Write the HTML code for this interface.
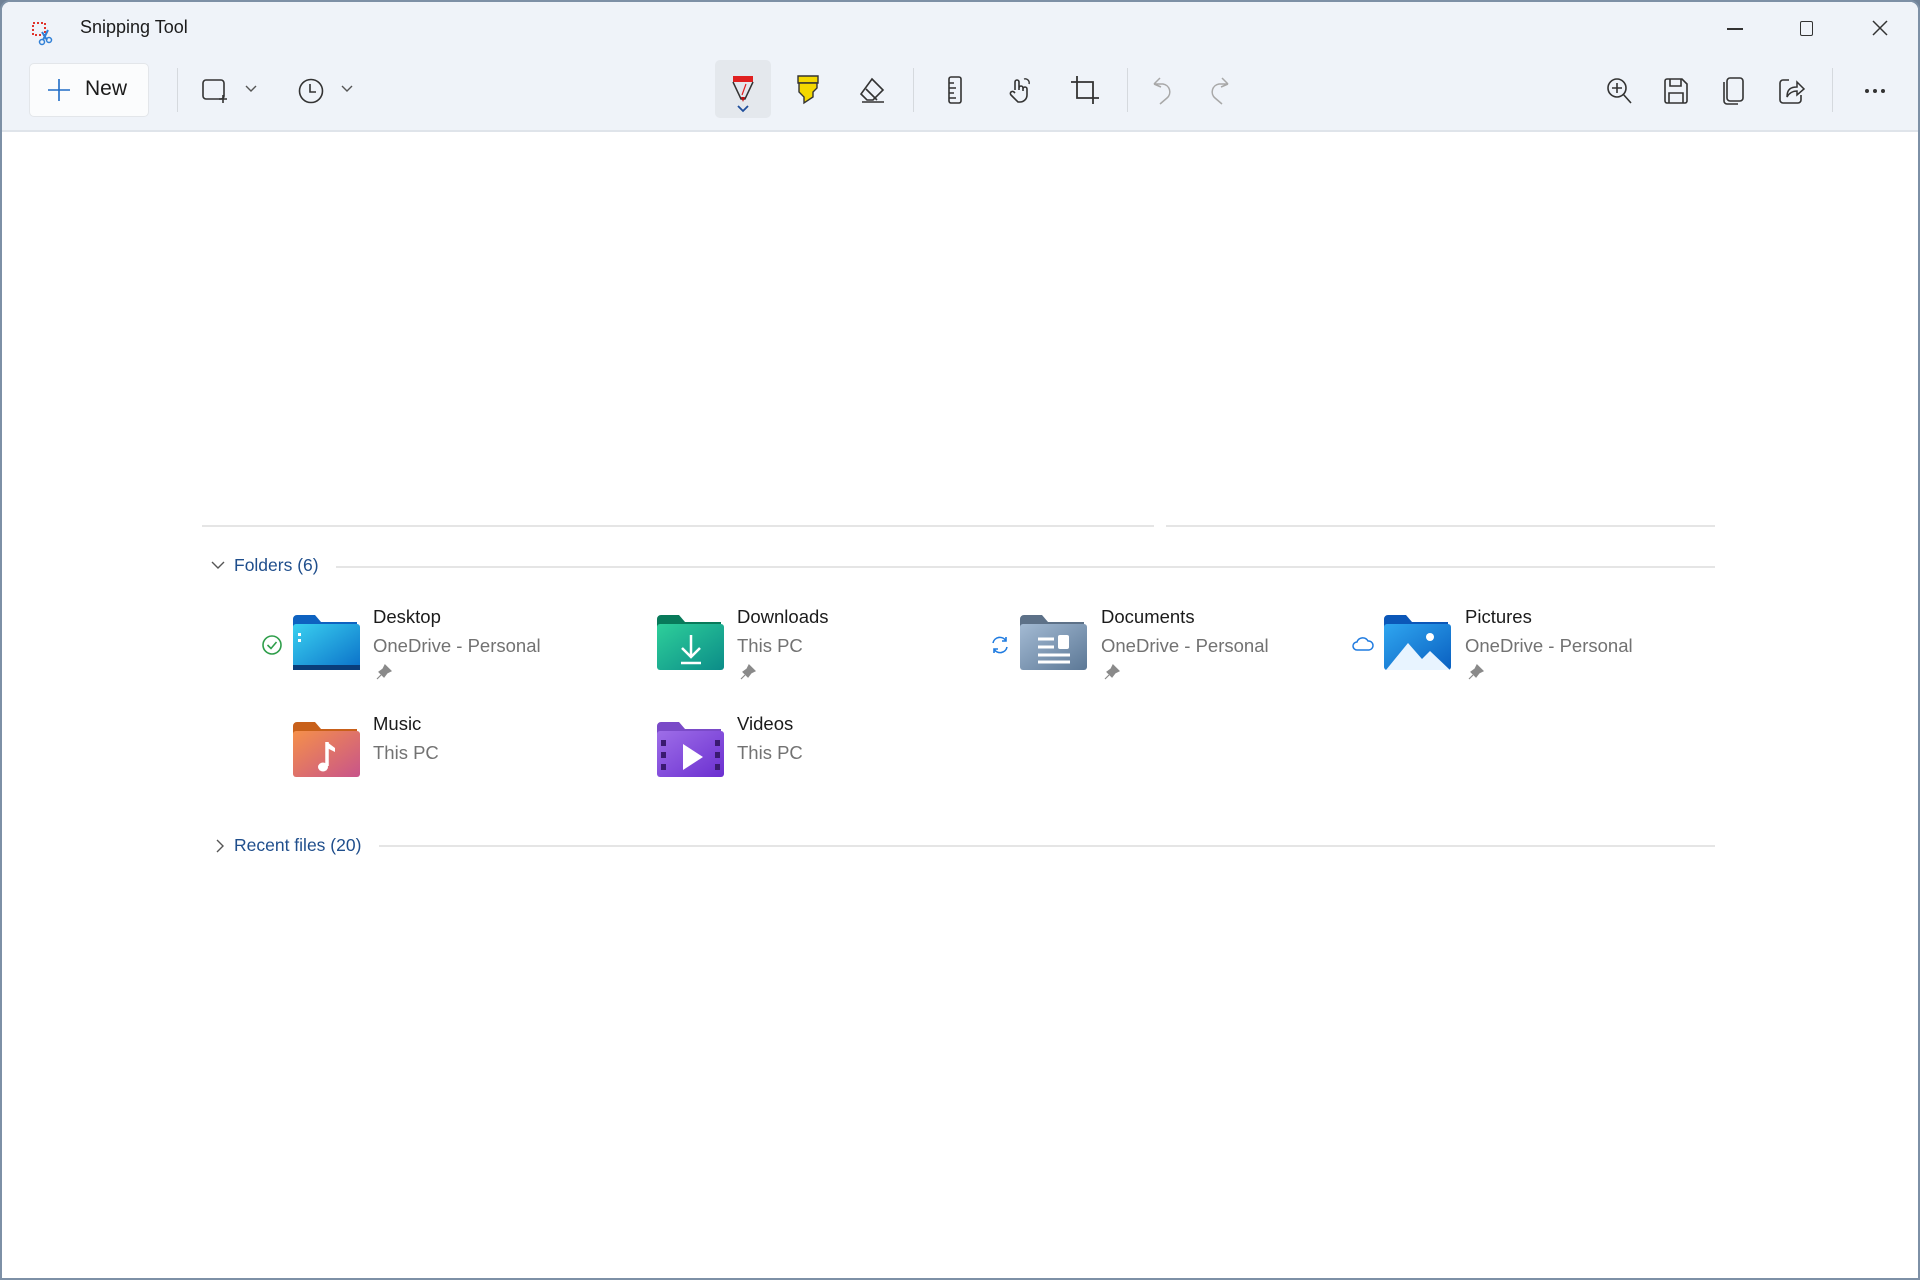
<!DOCTYPE html>
<html><head><meta charset="utf-8"><style>
*{margin:0;padding:0;box-sizing:border-box}
body{width:1920px;height:1280px;overflow:hidden;background:#6f8197;font-family:"Segoe UI","Liberation Sans",sans-serif;position:relative}
.win{position:absolute;left:0;top:0;width:1920px;height:1280px;background:#fff;border:2px solid #7d90a6;border-radius:10px 10px 0 0;overflow:hidden}
.top{position:absolute;left:0;top:0;width:100%;height:130px;background:#eff3f9;border-bottom:2px solid #dfe4ea}
.tb{position:absolute;left:-2px;top:-3px;width:100%;height:130px}
.ct{position:absolute;left:-3px;top:0;width:100%;height:100%}
.abs{position:absolute}
.t{position:absolute;white-space:nowrap}
.sep{position:absolute;width:1px;height:44px;top:69px;background:#d5d9de}
svg{position:absolute;overflow:visible}
.name{font-size:18.5px;color:#1b1b1b}
.sub{font-size:18.5px;color:#727272}
.hdr{font-size:17.5px;color:#1f4e8c}
.line{position:absolute;height:2px;background:#e5e5e5}
</style></head><body>
<div class="win">
<div class="top">
 <svg style="left:28px;top:18px" width="26" height="26" viewBox="0 0 26 26"><rect x="3" y="3" width="12" height="12" fill="none" stroke="#e0342c" stroke-width="2" stroke-dasharray="2 2"/><path d="M12 12 L17 20 M18 10 L13 20" stroke="#2f7fd6" stroke-width="2" fill="none"/><circle cx="12" cy="22" r="2.5" fill="none" stroke="#2f7fd6" stroke-width="1.5"/><circle cx="19" cy="20" r="2.5" fill="none" stroke="#2f7fd6" stroke-width="1.5"/></svg>
 <div class="t" style="left:78px;top:15px;font-size:18px;color:#1b1b1b">Snipping Tool</div>
 <div class="abs" style="left:1725px;top:26px;width:16px;height:1.5px;background:#333"></div>
 <div class="abs" style="left:1798px;top:19px;width:13px;height:15px;border:1.5px solid #333;border-radius:2px"></div>
 <svg style="left:1870px;top:18px" width="16" height="16"><path d="M1 1 L15 15 M15 1 L1 15" stroke="#333" stroke-width="1.5"/></svg>
 <div class="tb">
 <div class="abs" style="left:29px;top:64px;width:120px;height:54px;background:#fbfcfd;border:1px solid #e3e6ea;border-radius:5px"></div>
 <svg style="left:48px;top:80px" width="22" height="22"><path d="M11 0 V22 M0 11 H22" stroke="#1f6cc6" stroke-width="1.6"/></svg>
 <div class="t" style="left:85px;top:78px;font-size:21px;color:#1b1b1b">New</div>
 <div class="sep" style="left:177px"></div>
 <svg style="left:202px;top:80px" width="28" height="24"><rect x="1" y="1" width="21" height="19" rx="3" fill="none" stroke="#333" stroke-width="1.6"/><path d="M21 16 V24 M17 20 H25" stroke="#333" stroke-width="1.6"/></svg>
 <svg style="left:245px;top:86px" width="12" height="8"><path d="M1 1 L6 6 L11 1" stroke="#555" stroke-width="1.4" fill="none"/></svg>
 <svg style="left:298px;top:79px" width="26" height="26"><circle cx="13" cy="13" r="11.5" fill="none" stroke="#333" stroke-width="1.6"/><path d="M12 6 V14 H18" stroke="#333" stroke-width="1.6" fill="none"/></svg>
 <svg style="left:341px;top:86px" width="12" height="8"><path d="M1 1 L6 6 L11 1" stroke="#555" stroke-width="1.4" fill="none"/></svg>
 <div class="abs" style="left:715px;top:61px;width:56px;height:58px;background:#e4e8ed;border-radius:5px"></div>
 <svg style="left:731px;top:76px" width="24" height="30"><path d="M2 1 H22 V7 H2 Z" fill="#e02020"/><path d="M2 7 L10 24 H14 L22 7" fill="none" stroke="#333" stroke-width="1.5"/><path d="M10 22 L12 27 L14 22Z" fill="#c01010"/><path d="M15 9 L11 20" stroke="#e02020" stroke-width="1.2"/></svg>
 <svg style="left:737px;top:106px" width="12" height="8"><path d="M1 1 L6 6 L11 1" stroke="#1f4e9c" stroke-width="1.8" fill="none"/></svg>
 <svg style="left:796px;top:76px" width="24" height="30"><path d="M2 1 H22 V8 H2Z" fill="#f4d800" stroke="#333" stroke-width="1.4"/><path d="M3 8 V17 L8 22 V28 L17 22 V17 L21 13 V8Z" fill="#f4d800" stroke="#333" stroke-width="1.4"/></svg>
 <svg style="left:858px;top:78px" width="28" height="26"><path d="M14 2 L25 13 L15 23 H9 L3 17Z" fill="none" stroke="#333" stroke-width="1.6"/><path d="M8 12 L19 23 M4 25 H26" stroke="#333" stroke-width="1.6"/></svg>
 <div class="sep" style="left:913px"></div>
 <svg style="left:947px;top:77px" width="16" height="28"><rect x="2" y="1" width="12" height="26" rx="2" fill="none" stroke="#333" stroke-width="1.6"/><path d="M2 7 H7 M2 12 H9 M2 17 H7 M2 22 H9" stroke="#333" stroke-width="1.4"/></svg>
 <svg style="left:1006px;top:77px" width="28" height="28"><path d="M9 14 V6 a2 2 0 0 1 4 0 V14 M13 12 a2 2 0 0 1 4 0 V15 M17 13 a2 2 0 0 1 4 0 V19 a7 7 0 0 1 -7 7 H12 L5 19 a2 2 0 0 1 3 -3 L9 17" fill="none" stroke="#333" stroke-width="1.6"/><path d="M18 3 a4 4 0 0 1 5 5" fill="none" stroke="#333" stroke-width="1.4"/></svg>
 <svg style="left:1071px;top:77px" width="28" height="30"><path d="M6 0 V22 H28 M0 6 H22 V28" fill="none" stroke="#333" stroke-width="1.8"/></svg>
 <div class="sep" style="left:1127px"></div>
 <svg style="left:1151px;top:77px" width="24" height="30"><path d="M3 8 L9 2 M3 8 L10 11 M3 8 H12 a8 8 0 0 1 4 14 L9 28" fill="none" stroke="#a8a8a8" stroke-width="1.5"/></svg>
 <svg style="left:1207px;top:77px" width="24" height="30"><path d="M21 8 L15 2 M21 8 L14 11 M21 8 H12 a8 8 0 0 0 -4 14 L15 28" fill="none" stroke="#a8a8a8" stroke-width="1.5"/></svg>
 <svg style="left:1606px;top:78px" width="28" height="28"><circle cx="11" cy="11" r="9" fill="none" stroke="#333" stroke-width="1.6"/><path d="M11 6 V16 M6 11 H16 M17 17 L25 26" stroke="#333" stroke-width="1.6"/></svg>
 <svg style="left:1664px;top:79px" width="24" height="26"><path d="M1 3 a2 2 0 0 1 2 -2 H18 L23 6 V23 a2 2 0 0 1 -2 2 H3 a2 2 0 0 1 -2 -2Z" fill="none" stroke="#333" stroke-width="1.6"/><path d="M6 1 V8 H17 V1 M5 25 V15 H19 V25" fill="none" stroke="#333" stroke-width="1.6"/></svg>
 <svg style="left:1723px;top:78px" width="22" height="28"><rect x="4" y="1" width="16" height="23" rx="3" fill="none" stroke="#333" stroke-width="1.6"/><path d="M1 5 V24 a3 3 0 0 0 3 3 H15" fill="none" stroke="#333" stroke-width="1.6"/></svg>
 <svg style="left:1779px;top:78px" width="26" height="28"><path d="M10 3 H4 a3 3 0 0 0 -3 3 V23 a3 3 0 0 0 3 3 H19 a3 3 0 0 0 3 -3 V18" fill="none" stroke="#333" stroke-width="1.6"/><path d="M8 20 C8 12 12 10 18 10 V5 L25 12 L18 18 V14 C14 14 10 16 8 20Z" fill="none" stroke="#333" stroke-width="1.5"/></svg>
 <div class="sep" style="left:1832px"></div>
 <div class="abs" style="left:1865px;top:90px;width:4px;height:4px;border-radius:2px;background:#333;box-shadow:8px 0 #333,16px 0 #333"></div>
 </div>
</div>

<div class="ct">
<div class="line" style="left:203px;top:523px;width:952px"></div>
<div class="line" style="left:1167px;top:523px;width:549px"></div>

<svg style="left:212px;top:559px" width="14" height="9"><path d="M1 1 L7 7 L13 1" stroke="#555" stroke-width="1.4" fill="none"/></svg>
<div class="t hdr" style="left:235px;top:553px">Folders (6)</div>
<div class="line" style="left:337px;top:564px;width:1379px"></div>

<svg style="left:217px;top:837px" width="9" height="14"><path d="M1 1 L7 7 L1 13" stroke="#555" stroke-width="1.4" fill="none"/></svg>
<div class="t hdr" style="left:235px;top:833px">Recent files (20)</div>
<div class="line" style="left:380px;top:843px;width:1336px"></div>

<svg width="0" height="0"><defs>
<linearGradient id="gb" x1="0" y1="0" x2="1" y2="1"><stop offset="0" stop-color="#3ad0f0"/><stop offset="1" stop-color="#0a6fc8"/></linearGradient>
<linearGradient id="gg" x1="0" y1="0" x2="1" y2="1"><stop offset="0" stop-color="#2ecf9a"/><stop offset="1" stop-color="#0b8c88"/></linearGradient>
<linearGradient id="gs" x1="0" y1="0" x2="1" y2="1"><stop offset="0" stop-color="#a3bad3"/><stop offset="1" stop-color="#5c7896"/></linearGradient>
<linearGradient id="gp" x1="0" y1="0" x2="1" y2="1"><stop offset="0" stop-color="#2fa6f0"/><stop offset="1" stop-color="#0a5fc0"/></linearGradient>
<linearGradient id="go" x1="0" y1="0" x2="1" y2="1"><stop offset="0" stop-color="#f5904a"/><stop offset="1" stop-color="#c8548a"/></linearGradient>
<linearGradient id="gv" x1="0" y1="0" x2="1" y2="1"><stop offset="0" stop-color="#9e6ee8"/><stop offset="1" stop-color="#6b2fd0"/></linearGradient>
</defs></svg>

<svg style="left:294px;top:613px" width="67" height="56"><path d="M0 4 a4 4 0 0 1 4 -4 H22 L28 7 H64 V20 H0Z" fill="#0e62c0"/><rect x="0" y="9" width="67" height="46" rx="3" fill="url(#gb)"/><rect x="0" y="50" width="67" height="5" fill="#0a3d7a"/><rect x="5" y="18" width="3" height="3" fill="#fff"/><rect x="5" y="24" width="3" height="3" fill="#fff"/></svg>
<svg style="left:262px;top:632px" width="22" height="22"><circle cx="11" cy="11" r="9" fill="none" stroke="#2e9e4a" stroke-width="1.6"/><path d="M6.5 11 L10 14.5 L15.5 8" fill="none" stroke="#2e9e4a" stroke-width="1.6"/></svg>
<div class="t name" style="left:374px;top:604px">Desktop</div>
<div class="t sub" style="left:374px;top:633px">OneDrive - Personal</div>
<svg style="left:377px;top:662px" width="16" height="16"><path d="M9 1 L15 7 L11 9 L8 13 L3 8 L7 5Z M5 11 L1 15" fill="#8a8a8a" stroke="#8a8a8a" stroke-width="1.2"/></svg>

<svg style="left:658px;top:613px" width="67" height="56"><path d="M0 4 a4 4 0 0 1 4 -4 H22 L28 7 H64 V20 H0Z" fill="#087a5a"/><rect x="0" y="9" width="67" height="46" rx="3" fill="url(#gg)"/><path d="M34 20 V42 M25 33 L34 42 L43 33 M24 48 H44" stroke="#fff" stroke-width="2.5" fill="none"/></svg>
<div class="t name" style="left:738px;top:604px">Downloads</div>
<div class="t sub" style="left:738px;top:633px">This PC</div>
<svg style="left:741px;top:662px" width="16" height="16"><path d="M9 1 L15 7 L11 9 L8 13 L3 8 L7 5Z M5 11 L1 15" fill="#8a8a8a" stroke="#8a8a8a" stroke-width="1.2"/></svg>

<svg style="left:1021px;top:613px" width="67" height="56"><path d="M0 4 a4 4 0 0 1 4 -4 H22 L28 7 H64 V20 H0Z" fill="#5d7188"/><rect x="0" y="9" width="67" height="46" rx="3" fill="url(#gs)"/><path d="M18 24 H34 M18 32 H34 M18 40 H50 M18 47 H50" stroke="#fff" stroke-width="3"/><rect x="38" y="20" width="11" height="14" rx="2" fill="#fff"/></svg>
<svg style="left:990px;top:632px" width="22" height="22"><path d="M4 9 a7 7 0 0 1 13 -2 M17 3 V7 H13 M18 13 a7 7 0 0 1 -13 2 M5 19 V15 H9" fill="none" stroke="#1f7be0" stroke-width="1.6"/></svg>
<div class="t name" style="left:1102px;top:604px">Documents</div>
<div class="t sub" style="left:1102px;top:633px">OneDrive - Personal</div>
<svg style="left:1105px;top:662px" width="16" height="16"><path d="M9 1 L15 7 L11 9 L8 13 L3 8 L7 5Z M5 11 L1 15" fill="#8a8a8a" stroke="#8a8a8a" stroke-width="1.2"/></svg>

<svg style="left:1385px;top:613px" width="67" height="56"><path d="M0 4 a4 4 0 0 1 4 -4 H22 L28 7 H64 V20 H0Z" fill="#0b57b8"/><rect x="0" y="9" width="67" height="46" rx="3" fill="url(#gp)"/><path d="M2 55 L24 28 L38 44 L46 36 L66 55Z" fill="#e8f4ff"/><circle cx="46" cy="22" r="4" fill="#fff"/></svg>
<svg style="left:1353px;top:633px" width="22" height="18"><path d="M5 15 a4 4 0 0 1 0 -8 a6 6 0 0 1 11 -1 a4.5 4.5 0 0 1 1 9Z" fill="none" stroke="#1f7be0" stroke-width="1.5"/></svg>
<div class="t name" style="left:1466px;top:604px">Pictures</div>
<div class="t sub" style="left:1466px;top:633px">OneDrive - Personal</div>
<svg style="left:1469px;top:662px" width="16" height="16"><path d="M9 1 L15 7 L11 9 L8 13 L3 8 L7 5Z M5 11 L1 15" fill="#8a8a8a" stroke="#8a8a8a" stroke-width="1.2"/></svg>

<svg style="left:294px;top:720px" width="67" height="56"><path d="M0 4 a4 4 0 0 1 4 -4 H22 L28 7 H64 V20 H0Z" fill="#c8601a"/><rect x="0" y="9" width="67" height="46" rx="3" fill="url(#go)"/><path d="M34 20 V44" stroke="#fff" stroke-width="3.5"/><ellipse cx="30" cy="45" rx="5" ry="4.5" fill="#fff"/><path d="M34 20 L42 26 V30 L34 26Z" fill="#fff"/></svg>
<div class="t name" style="left:374px;top:711px">Music</div>
<div class="t sub" style="left:374px;top:740px">This PC</div>

<svg style="left:658px;top:720px" width="67" height="56"><path d="M0 4 a4 4 0 0 1 4 -4 H22 L28 7 H64 V20 H0Z" fill="#7a4ac8"/><rect x="0" y="9" width="67" height="46" rx="3" fill="url(#gv)"/><path d="M26 22 V48 L46 35Z" fill="#fff"/><g fill="#3a1a70"><rect x="4" y="18" width="5" height="6"/><rect x="4" y="30" width="5" height="6"/><rect x="4" y="42" width="5" height="6"/><rect x="58" y="18" width="5" height="6"/><rect x="58" y="30" width="5" height="6"/><rect x="58" y="42" width="5" height="6"/></g></svg>
<div class="t name" style="left:738px;top:711px">Videos</div>
<div class="t sub" style="left:738px;top:740px">This PC</div>
</div>
</div>
</body></html>
